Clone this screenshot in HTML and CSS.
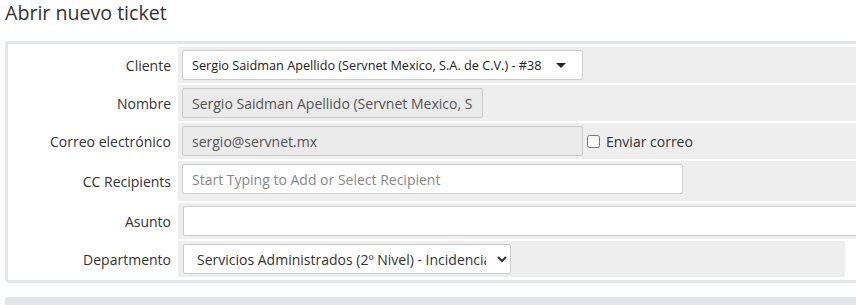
FILE: index.html
```html
<!DOCTYPE html>
<html lang="es">
<head>
    <meta charset="UTF-8">
    <title>Abrir nuevo ticket</title>
    <link rel="stylesheet" href="styles.css">
</head>
<body>
    <h1 class="page-title">Abrir nuevo ticket</h1>
    <div class="panel">
        <div class="form-row">
            <div class="field-label">Cliente</div>
            <div class="field-cell">
                <div class="fake-select">
                    <span>Sergio Saidman Apellido (Servnet Mexico, S.A. de C.V.) - #38</span>
                    <span class="caret"></span>
                </div>
            </div>
        </div>
        <div class="form-row">
            <div class="field-label">Nombre</div>
            <div class="field-cell">
                <input type="text" class="input input-name" value="Sergio Saidman Apellido (Servnet Mexico, S.A. de C.V.)" disabled>
            </div>
        </div>
        <div class="form-row">
            <div class="field-label">Correo electrónico</div>
            <div class="field-cell">
                <input type="text" class="input input-mail" value="sergio@servnet.mx" disabled>
                <label class="check"><input type="checkbox"> Enviar correo</label>
            </div>
        </div>
        <div class="form-row">
            <div class="field-label">CC Recipients</div>
            <div class="field-cell cell-cc">
                <input type="text" class="input input-cc" placeholder="Start Typing to Add or Select Recipient">
            </div>
        </div>
        <div class="form-row">
            <div class="field-label">Asunto</div>
            <div class="field-cell cell-wide">
                <input type="text" class="input input-subject">
            </div>
        </div>
        <div class="form-row">
            <div class="field-label">Departmento</div>
            <div class="field-cell cell-dept">
                <select class="input select-dept">
                    <option>Servicios Administrados (2º Nivel) - Incidencias</option>
                </select>
            </div>
        </div>
    </div>
    <div class="panel panel-next"></div>
</body>
</html>
```

FILE: styles.css
```css
* {
    box-sizing: border-box;
}

body {
    margin: 0;
    overflow: hidden;
    font-family: 'Open Sans', Arial, sans-serif;
    font-size: 14px;
    color: #333;
    background: #fff;
}

.page-title {
    margin: 0;
    padding: 1px 0 0 5px;
    font-size: 19.6px;
    font-weight: normal;
    line-height: 24px;
    color: #333;
}

.panel {
    width: 920px;
    margin: 16px 0 0 5px;
    border: 3px solid #e2e6e8;
    border-radius: 4px;
    padding: 3px 0 0 0;
    display: flex;
    flex-direction: column;
    gap: 2px;
    height: 242px;
}

.panel-next {
    margin-top: 14px;
    height: 40px;
    background: #e2e6e8;
}

.form-row {
    display: flex;
    gap: 2px;
}

.field-label {
    width: 168px;
    flex-shrink: 0;
    padding-right: 5px;
    text-align: right;
    display: flex;
    align-items: center;
    justify-content: flex-end;
}

.field-cell {
    flex: 1;
    background: #eee;
    padding: 3px 4px;
    display: flex;
    align-items: center;
}

.cell-cc {
    padding-bottom: 7px;
}

.cell-wide {
    padding-left: 5px;
}

.cell-dept {
    flex: none;
    width: 667px;
    padding-left: 5px;
}

.input {
    height: 30px;
    border: 1px solid #ccc;
    border-radius: 2px;
    padding: 0 9px;
    font-family: inherit;
    font-size: 14px;
    color: #333;
    background: #fff;
}

.input:disabled {
    background: #eaeaea;
    color: #555;
}

.input::placeholder {
    color: #888;
}

.fake-select {
    width: 401px;
    height: 30px;
    border: 1px solid #ccc;
    border-radius: 2px;
    background: #fff;
    padding: 0 9px;
    display: flex;
    align-items: center;
    justify-content: space-between;
    font-size: 12.7px;
    color: #222;
}

.caret {
    width: 0;
    height: 0;
    border-left: 5px solid transparent;
    border-right: 5px solid transparent;
    border-top: 5px solid #222;
    margin-right: 7px;
}

.input-name {
    width: 301px;
}

.input-mail {
    width: 401px;
}

.input-cc {
    width: 501px;
}

.input-subject {
    width: 700px;
}

.select-dept {
    width: 328px;
    padding: 0 8px 0 9px;
}

.check {
    display: flex;
    align-items: center;
    margin-left: 4px;
    gap: 4px;
    color: #333;
}

.check input {
    margin: 1px 2px 0 0;
    width: 13px;
    height: 13px;
}
```
